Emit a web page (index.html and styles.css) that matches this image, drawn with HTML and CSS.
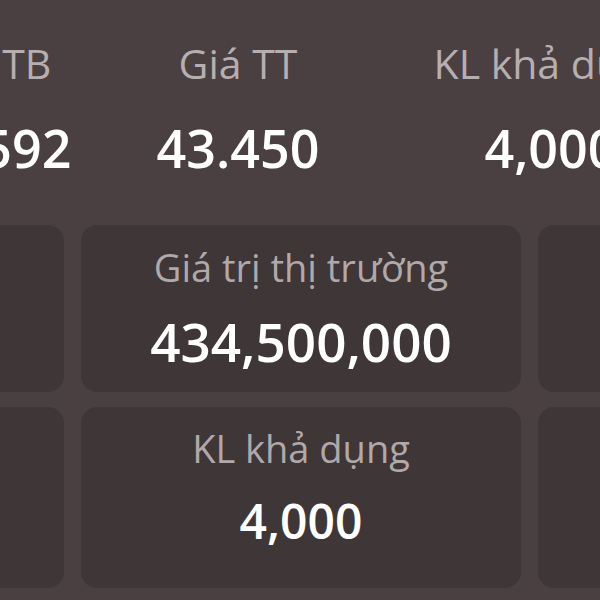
FILE: index.html
```html
<!DOCTYPE html>
<html lang="vi">
  <head>
    <meta charset="UTF-8" />
    <meta name="viewport" content="width=device-width, initial-scale=1.0" />
    <title>Danh mục</title>
    <link rel="stylesheet" href="styles.css">
  </head>
  <body>
    <div class="summary">
      <div class="stat">
        <span class="stat-label">Giá TB</span>
        <span class="stat-value">42.592</span>
      </div>
      <div class="stat">
        <span class="stat-label">Giá TT</span>
        <span class="stat-value">43.450</span>
      </div>
      <div class="stat">
        <span class="stat-label">KL khả dụng</span>
        <span class="stat-value">4,000</span>
      </div>
    </div>
    <div class="cards">
      <div class="card">
        <span class="card-label">Giá trị vốn</span>
        <span class="card-value">426,368,000</span>
      </div>
      <div class="card">
        <span class="card-label">Giá trị thị trường</span>
        <span class="card-value">434,500,000</span>
      </div>
      <div class="card">
        <span class="card-label">Lãi/lỗ</span>
        <span class="card-value">8,132,000</span>
      </div>
      <div class="card card-sm">
        <span class="card-label">Tổng KL</span>
        <span class="card-value">4,000</span>
      </div>
      <div class="card card-sm">
        <span class="card-label">KL khả dụng</span>
        <span class="card-value">4,000</span>
      </div>
      <div class="card card-sm">
        <span class="card-label">KL chờ về</span>
        <span class="card-value">0</span>
      </div>
    </div>
  </body>
</html>
```

FILE: styles.css
```css
html,
body {
  margin: 0;
  padding: 0;
  height: 100%;
  overflow: hidden;
  background: #4a4042;
  font-family: 'Open Sans', 'Noto Sans', sans-serif;
}
.summary {
  display: grid;
  grid-template-columns: 248px 248px 378px;
  margin-left: -134px;
  padding-top: 43px;
}
.stat {
  display: flex;
  flex-direction: column;
  align-items: center;
  gap: 38px;
}
.stat-label {
  font-size: 41px;
  line-height: 41px;
  color: #b7aeaf;
  white-space: nowrap;
}
.stat-value {
  font-size: 52px;
  line-height: 52px;
  font-weight: 600;
  color: #fff;
  white-space: nowrap;
}
.cards {
  display: grid;
  grid-template-columns: repeat(3, 440px);
  grid-template-rows: 167px 181px;
  gap: 15px 17px;
  margin-left: -376px;
  margin-top: 51px;
}
.card {
  display: flex;
  flex-direction: column;
  align-items: center;
  gap: 29px;
  padding-top: 23px;
  background: #3e3637;
  border-radius: 16px;
}
.card-label {
  font-size: 38px;
  line-height: 38px;
  color: #b1a8a9;
  white-space: nowrap;
}
.card-value {
  font-size: 53px;
  line-height: 53px;
  font-weight: 600;
  color: #fff;
  white-space: nowrap;
}
.card-sm {
  padding-top: 22px;
  gap: 30px;
}
.card-sm .card-value {
  font-size: 48px;
  line-height: 48px;
}
```
